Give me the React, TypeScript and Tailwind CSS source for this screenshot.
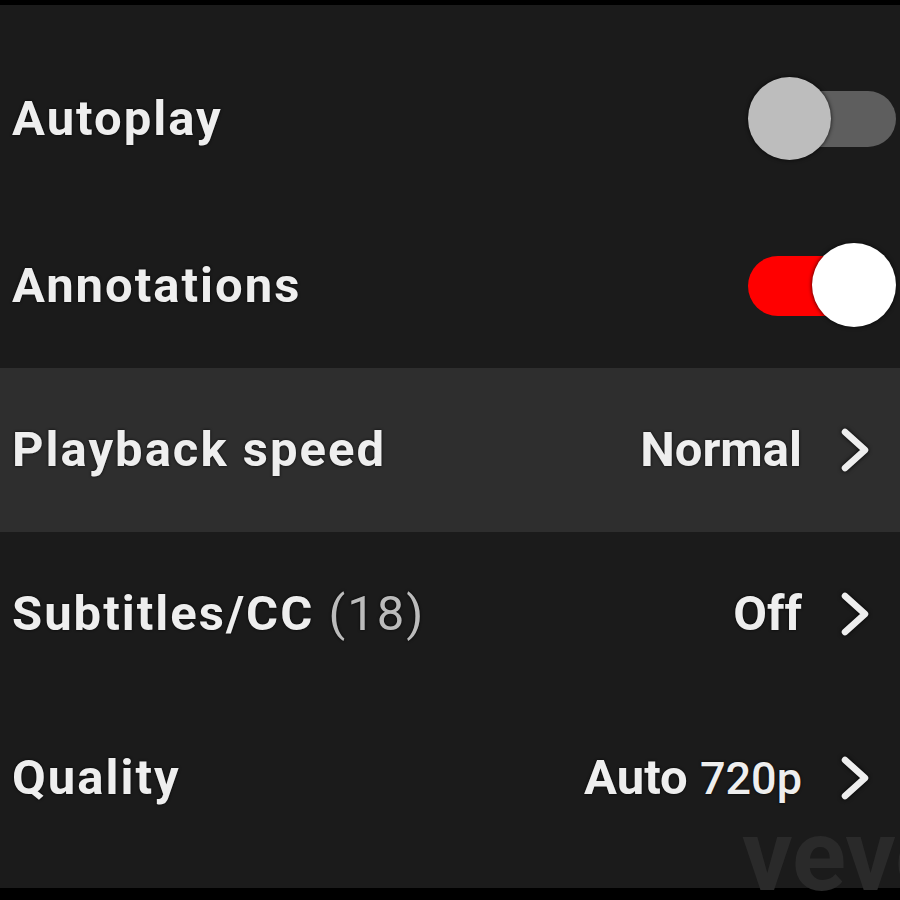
const shadow = "[text-shadow:0_0_3px_rgba(0,0,0,0.9)]"

const Toggle = ({ on }: { on: boolean }) => {
    if (on) {
        return (
            <div className="relative w-[148px] h-[86px] flex items-center">
                <div className="w-[120px] h-[60px] rounded-full bg-[#f00]" />
                <div className="absolute right-0 top-0 w-[84px] h-[84px] rounded-full bg-white shadow-[0_0_4px_rgba(0,0,0,0.8)]" />
            </div>
        )
    }
    return (
        <div className="relative w-[148px] h-[86px] flex items-center justify-end">
            <div className="w-[130px] h-[56px] rounded-full bg-[#5e5e5e]" />
            <div className="absolute left-0 top-[1px] w-[83px] h-[83px] rounded-full bg-[#bdbdbd] shadow-[0_0_4px_rgba(0,0,0,0.8)]" />
        </div>
    )
}

const Chevron = () => (
    <svg width="34" height="46" viewBox="0 0 34 46" className="drop-shadow-[0_0_2px_rgba(0,0,0,0.9)]">
        <polyline points="7,5 27,23 7,41" fill="none" stroke="#eeeeee" strokeWidth="6.5" strokeLinecap="round" strokeLinejoin="round" />
    </svg>
)

const Row = ({ children, active }: { children: React.ReactNode; active?: boolean }) => (
    <div className={`h-[164px] flex items-center justify-between pl-[12px] pr-[28px] ${active ? "bg-[#2e2e2e]" : ""}`}>
        {children}
    </div>
)

const Label = ({ children }: { children: React.ReactNode }) => (
    <span className={`tracking-[2px] ${shadow}`}>{children}</span>
)

const Value = ({ children }: { children: React.ReactNode }) => (
    <div className="flex items-center gap-[36px]">
        <span className={`text-[#eeeeee] ${shadow}`}>{children}</span>
        <Chevron />
    </div>
)

export default function App() {
    return (
        <div
            className="relative w-[900px] h-[900px] bg-[#1b1b1b] overflow-hidden flex flex-col text-[49px] font-bold text-[#eeeeee]"
            style={{ fontFamily: "Roboto, 'Liberation Sans', sans-serif" }}
        >
            <div className="h-[5px] bg-black" />
            <div className="h-[35px]" />

            <Row>
                <div className="-mt-[6px]">
                    <Label>Autoplay</Label>
                </div>
                <div className="-mr-[24px] -mt-[6px]">
                    <Toggle on={false} />
                </div>
            </Row>
            <Row>
                <Label>Annotations</Label>
                <div className="-mr-[24px]">
                    <Toggle on={true} />
                </div>
            </Row>
            <Row active>
                <Label>Playback speed</Label>
                <Value>Normal</Value>
            </Row>
            <Row>
                <Label>
                    Subtitles/CC <span className="font-normal text-[#bbbbbb]">(18)</span>
                </Label>
                <Value>Off</Value>
            </Row>
            <Row>
                <Label>Quality</Label>
                <Value>
                    Auto <span className="font-medium text-[45px]">720p</span>
                </Value>
            </Row>

            <div className="flex-1" />
            <div className="h-[12px] bg-black" />

            {/* vevo watermark */}
            <div className="absolute left-[742px] top-[806px] text-[100px] font-bold text-[#2a2a2a] leading-none">
                vevo
            </div>
        </div>
    )
}
